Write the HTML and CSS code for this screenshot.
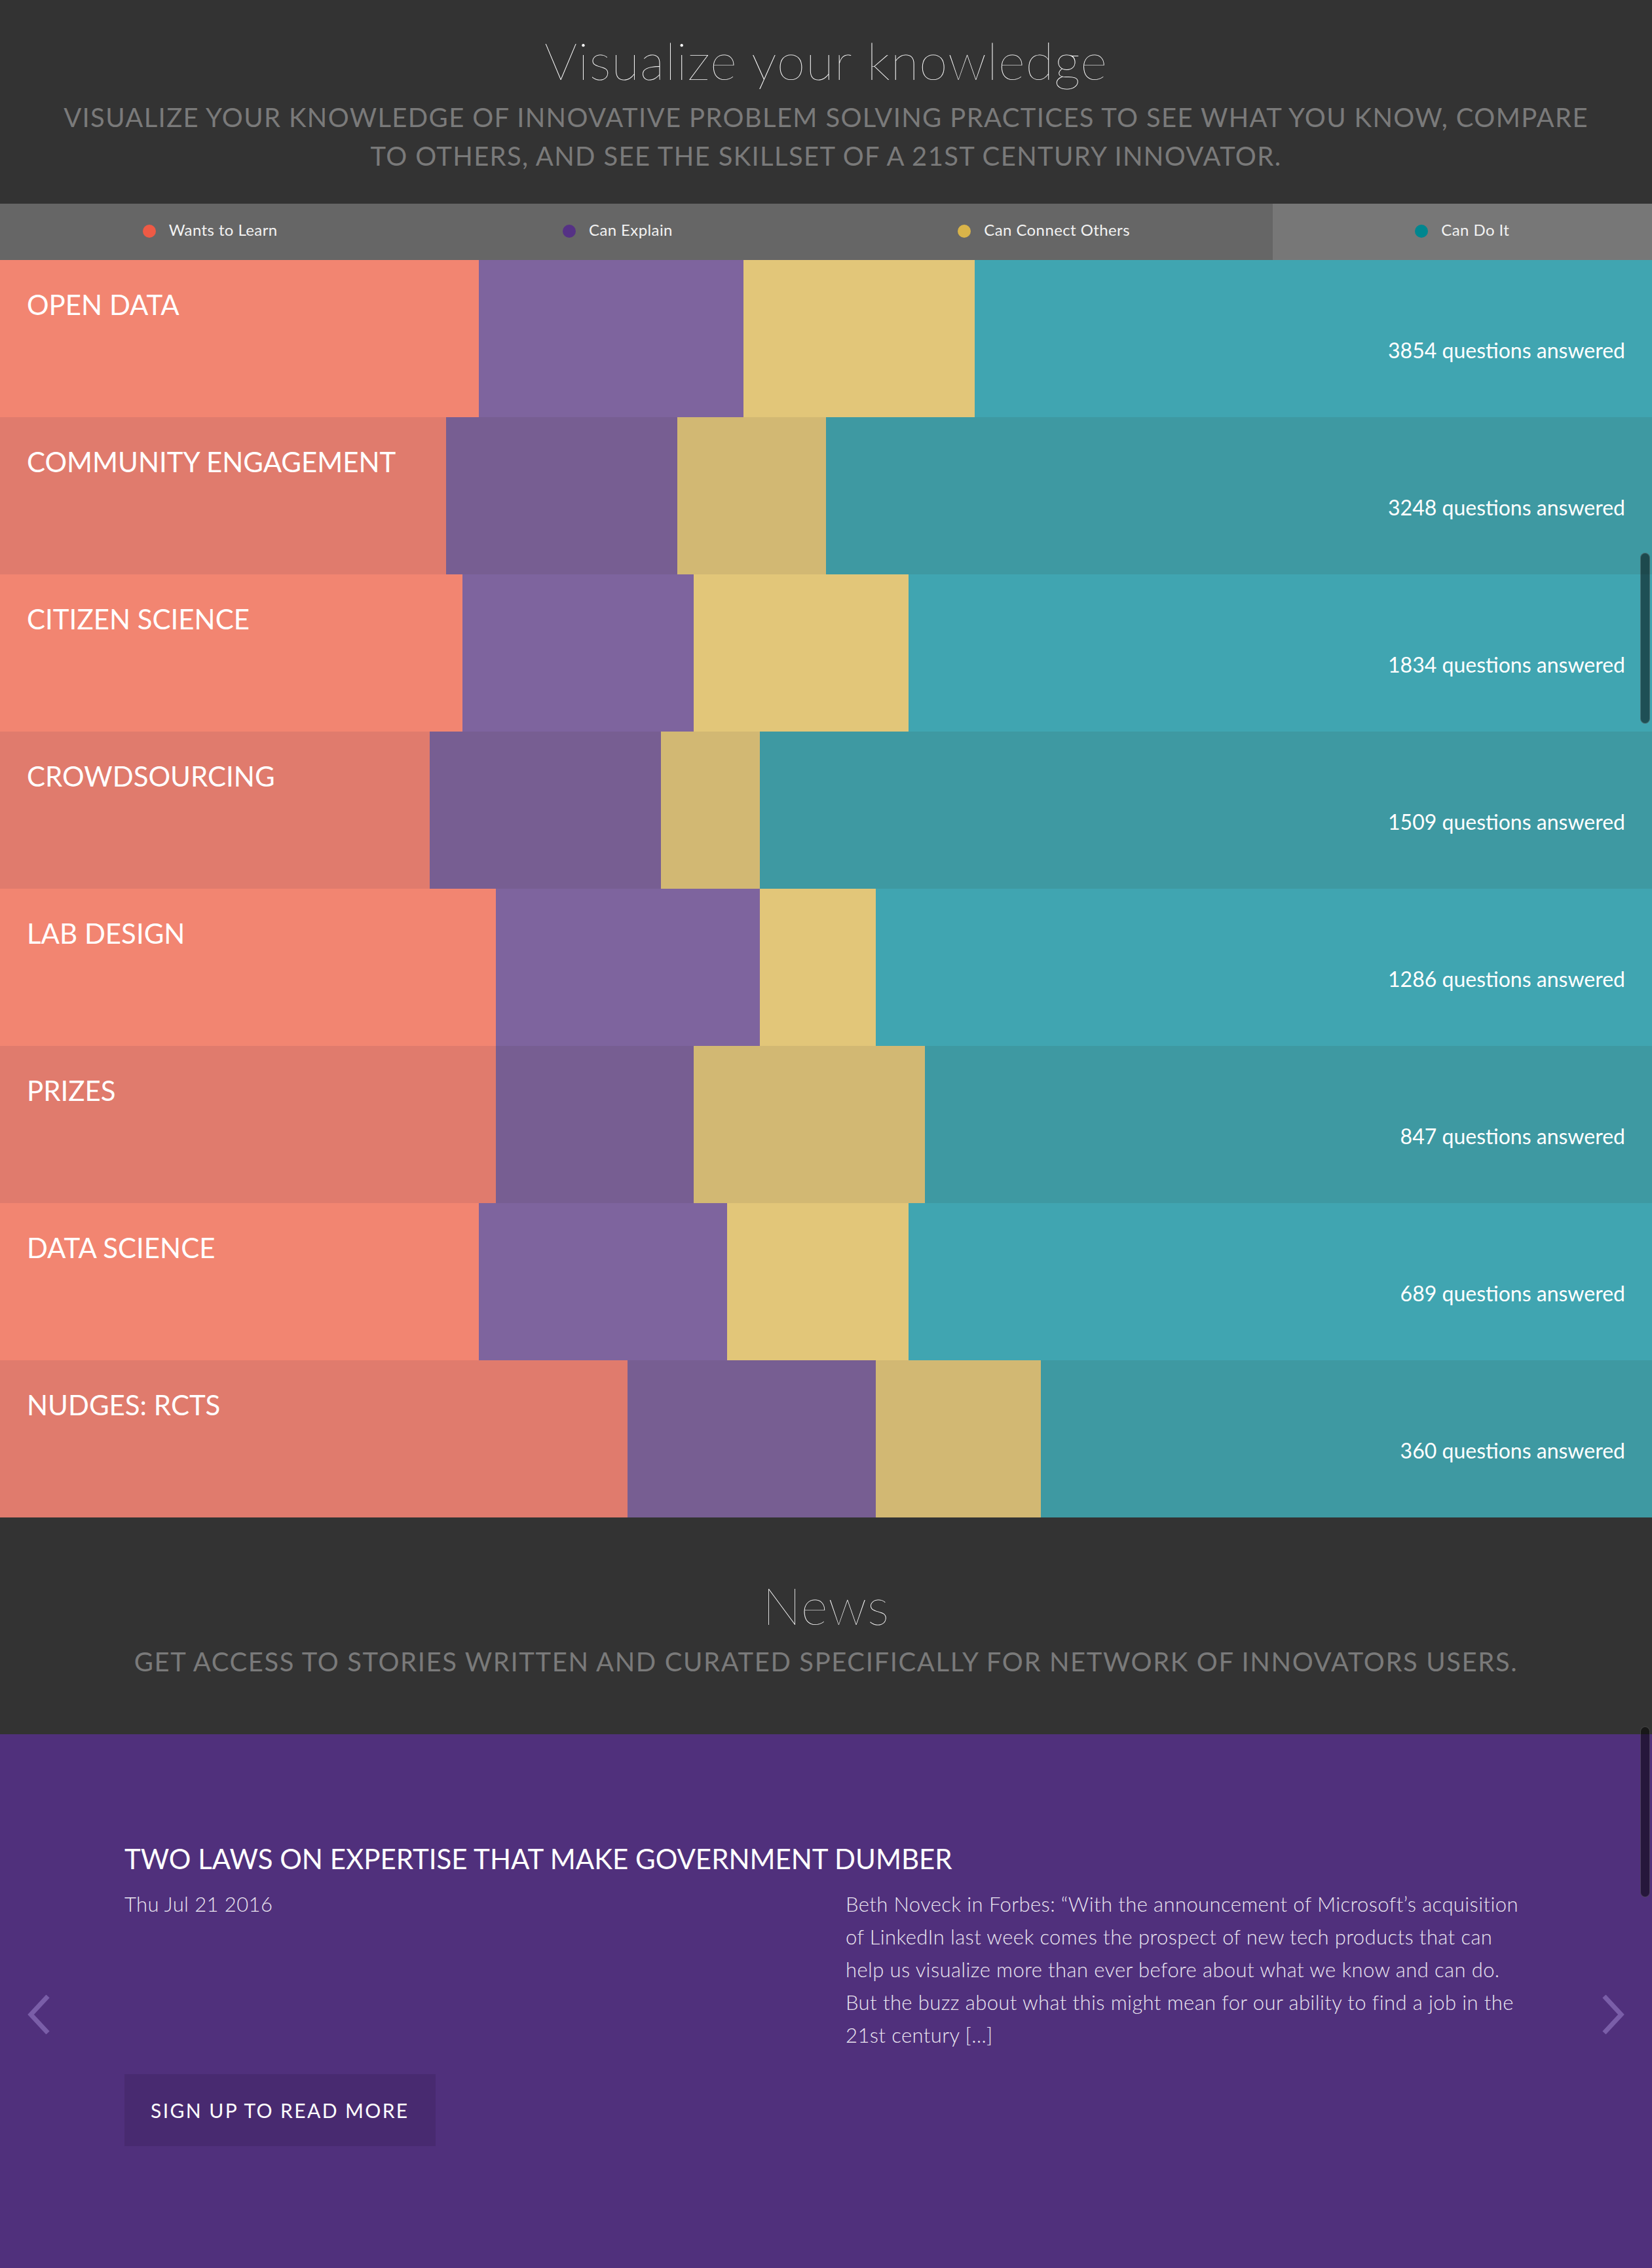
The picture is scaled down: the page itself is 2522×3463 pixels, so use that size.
FILE: index.html
```html
<!DOCTYPE html>
<html lang="en">
<head>
<meta charset="utf-8">
<title>Visualize your knowledge</title>
<link rel="stylesheet" href="styles.css">
</head>
<body>
<header class="intro">
  <h1 class="intro-title">Visualize your knowledge</h1>
  <p class="intro-sub">VISUALIZE YOUR KNOWLEDGE OF INNOVATIVE PROBLEM SOLVING PRACTICES TO SEE WHAT YOU KNOW, COMPARE<br>TO OTHERS, AND SEE THE SKILLSET OF A 21ST CENTURY INNOVATOR.</p>
</header>

<nav class="legend">
  <div class="legend-item"><span class="dot dot-learn"></span><span>Wants to Learn</span></div>
  <div class="legend-item"><span class="dot dot-explain"></span><span>Can Explain</span></div>
  <div class="legend-item"><span class="dot dot-connect"></span><span>Can Connect Others</span></div>
  <div class="legend-item is-active"><span class="dot dot-do"></span><span>Can Do It</span></div>
</nav>

<section class="chart">
  <div class="row">
    <div class="bars"><span class="seg learn" style="width:29%"></span><span class="seg explain" style="width:16%"></span><span class="seg connect" style="width:14%"></span><span class="seg do"></span></div>
    <div class="row-content"><h3 class="row-label">OPEN DATA</h3><p class="row-count">3854 questions answered</p></div>
  </div>
  <div class="row">
    <div class="bars"><span class="seg learn" style="width:27%"></span><span class="seg explain" style="width:14%"></span><span class="seg connect" style="width:9%"></span><span class="seg do"></span></div>
    <div class="row-content"><h3 class="row-label">COMMUNITY ENGAGEMENT</h3><p class="row-count">3248 questions answered</p></div>
  </div>
  <div class="row">
    <div class="bars"><span class="seg learn" style="width:28%"></span><span class="seg explain" style="width:14%"></span><span class="seg connect" style="width:13%"></span><span class="seg do"></span></div>
    <div class="row-content"><h3 class="row-label">CITIZEN SCIENCE</h3><p class="row-count">1834 questions answered</p></div>
  </div>
  <div class="row">
    <div class="bars"><span class="seg learn" style="width:26%"></span><span class="seg explain" style="width:14%"></span><span class="seg connect" style="width:6%"></span><span class="seg do"></span></div>
    <div class="row-content"><h3 class="row-label">CROWDSOURCING</h3><p class="row-count">1509 questions answered</p></div>
  </div>
  <div class="row">
    <div class="bars"><span class="seg learn" style="width:30%"></span><span class="seg explain" style="width:16%"></span><span class="seg connect" style="width:7%"></span><span class="seg do"></span></div>
    <div class="row-content"><h3 class="row-label">LAB DESIGN</h3><p class="row-count">1286 questions answered</p></div>
  </div>
  <div class="row">
    <div class="bars"><span class="seg learn" style="width:30%"></span><span class="seg explain" style="width:12%"></span><span class="seg connect" style="width:14%"></span><span class="seg do"></span></div>
    <div class="row-content"><h3 class="row-label">PRIZES</h3><p class="row-count">847 questions answered</p></div>
  </div>
  <div class="row">
    <div class="bars"><span class="seg learn" style="width:29%"></span><span class="seg explain" style="width:15%"></span><span class="seg connect" style="width:11%"></span><span class="seg do"></span></div>
    <div class="row-content"><h3 class="row-label">DATA SCIENCE</h3><p class="row-count">689 questions answered</p></div>
  </div>
  <div class="row">
    <div class="bars"><span class="seg learn" style="width:38%"></span><span class="seg explain" style="width:15%"></span><span class="seg connect" style="width:10%"></span><span class="seg do"></span></div>
    <div class="row-content"><h3 class="row-label">NUDGES: RCTS</h3><p class="row-count">360 questions answered</p></div>
  </div>
  <div class="scroll-thumb chart-thumb"></div>
</section>

<header class="intro news-intro">
  <h2 class="intro-title">News</h2>
  <p class="intro-sub">GET ACCESS TO STORIES WRITTEN AND CURATED SPECIFICALLY FOR NETWORK OF INNOVATORS USERS.</p>
</header>

<section class="news">
  <div class="scroll-thumb news-thumb"></div>
  <button class="nav-arrow nav-prev" aria-label="Previous">
    <svg width="37" height="60" viewBox="0 0 37 60"><polyline points="33,2 7,30 33,58" fill="none" stroke="#7a5ea8" stroke-width="7"/></svg>
  </button>
  <article class="article">
    <h3 class="article-title">TWO LAWS ON EXPERTISE THAT MAKE GOVERNMENT DUMBER</h3>
    <div class="article-grid">
      <p class="article-date">Thu Jul 21 2016</p>
      <p class="article-body">Beth Noveck in Forbes: “With the announcement of Microsoft’s acquisition of LinkedIn last week comes the prospect of new tech products that can help us visualize more than ever before about what we know and can do. But the buzz about what this might mean for our ability to find a job in the 21st century […]</p>
    </div>
    <a class="signup-btn" href="#">SIGN UP TO READ MORE</a>
  </article>
  <button class="nav-arrow nav-next" aria-label="Next">
    <svg width="37" height="60" viewBox="0 0 37 60"><polyline points="4,2 30,30 4,58" fill="none" stroke="#7a5ea8" stroke-width="7"/></svg>
  </button>
</section>
</body>
</html>
```

FILE: styles.css
```css
* { box-sizing: border-box; }

body {
  margin: 0;
  font-family: Lato, "Open Sans", "Liberation Sans", sans-serif;
  color: #fff;
  background: #50307c;
}

/* Header blocks */
.intro {
  background: #333333;
  text-align: center;
  padding: 47px 40px 43px;
}
.intro-title {
  margin: 0;
  font-size: 79px;
  line-height: 90px;
  font-weight: 200;
  letter-spacing: 0.8px;
  color: #ffffff;
}
.intro-sub {
  margin: 13px 0 0;
  font-size: 40px;
  line-height: 59px;
  font-weight: 400;
  color: #7a7a7a;
  letter-spacing: 1.35px;
}
.news-intro {
  padding: 89px 40px 81px;
}
.news-intro .intro-sub {
  margin-top: 12px;
  letter-spacing: 1.6px;
}

/* Legend */
.legend {
  display: flex;
  height: 86px;
  background: #666666;
}
.legend-item {
  flex: 1 1 auto;
  display: flex;
  align-items: center;
  justify-content: center;
  gap: 20px;
  font-size: 24px;
  letter-spacing: 0.4px;
  color: #f2f2f2;
  padding-bottom: 7px;
}
.legend-item.is-active {
  background: #777777;
}
.dot {
  width: 20px;
  height: 20px;
  border-radius: 50%;
  flex: none;
  margin-top: 4px;
}
.dot-learn { background: #ee5a45; }
.dot-explain { background: #553185; }
.dot-connect { background: #d9b44a; }
.dot-do { background: #00868f; }

/* Chart rows */
.chart {
  position: relative;
}
.row {
  display: grid;
  height: 240px;
}
.bars,
.row-content {
  grid-area: 1 / 1;
}
.bars {
  display: flex;
}
.seg { display: block; height: 100%; }
.seg.do { flex: 1; }
.learn { background: #f28571; }
.explain { background: #7e649e; }
.connect { background: #e2c679; }
.do { background: #40a5b1; }
.row:nth-child(even) .learn { background: #e07b6d; }
.row:nth-child(even) .explain { background: #775e92; }
.row:nth-child(even) .connect { background: #d2b873; }
.row:nth-child(even) .do { background: #3e99a2; }

.row-content {
  padding: 43px 41px 0 41px;
}
.row-label {
  margin: 0;
  font-size: 42px;
  line-height: 1.2;
  font-weight: 400;
  color: #ffffff;
}
.row-count {
  margin: 26px 0 0;
  text-align: right;
  font-size: 32px;
  line-height: 1.2;
  color: #ffffff;
}

.scroll-thumb {
  position: absolute;
  right: 3px;
  width: 15px;
  height: 261px;
  border-radius: 8px;
  background: rgba(0, 0, 0, 0.52);
  border: 1px solid rgba(255, 255, 255, 0.18);
  z-index: 2;
}
.chart-thumb { top: 447px; }
.news-thumb { top: -12px; }

/* News carousel */
.news {
  position: relative;
  background: #50307c;
  padding: 165px 190px 186px;
}
.article-title {
  margin: 0;
  font-size: 42px;
  line-height: 1.2;
  font-weight: 400;
  color: #ffffff;
}
.article-grid {
  display: grid;
  grid-template-columns: 1fr 1fr;
  column-gap: 60px;
  margin-top: 19px;
}
.article-date,
.article-body {
  margin: 0;
  font-size: 31px;
  line-height: 50px;
  font-weight: 300;
  letter-spacing: 0.4px;
  color: #ebe6f1;
}
.signup-btn {
  display: inline-flex;
  align-items: center;
  height: 110px;
  padding: 0 40px;
  margin-top: 35px;
  background: #482a70;
  color: #ffffff;
  text-decoration: none;
  font-size: 30px;
  letter-spacing: 2.4px;
}
.nav-arrow {
  position: absolute;
  top: 398px;
  padding: 0;
  border: 0;
  background: none;
  line-height: 0;
}
.nav-prev { left: 40px; }
.nav-next { right: 40px; }
```
